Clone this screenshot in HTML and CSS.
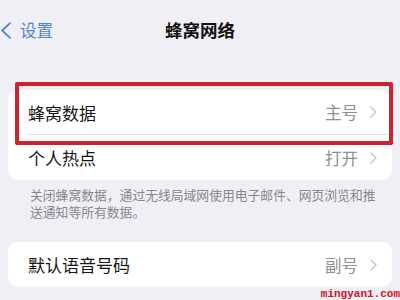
FILE: index.html
```html
<!DOCTYPE html>
<html lang="zh-CN">
<head>
<meta charset="utf-8">
<link rel="stylesheet" href="styles.css">
</head>
<body>
<div class="screen">
  <header class="nav">
    <div class="back">
      <svg class="back-icon" width="12" height="17" viewBox="0 0 12 17"><path d="M10 1.2 L2.2 8.5 L10 15.8" fill="none" stroke="#4f84d2" stroke-width="1.8" stroke-linecap="round" stroke-linejoin="round"/></svg>
      <span>设置</span>
    </div>
    <div class="title">蜂窝网络</div>
    <div></div>
  </header>

  <section class="card card-first">
    <div class="row">
      <span class="label">蜂窝数据</span>
      <span class="value">主号</span>
      <svg class="chev" width="7" height="12" viewBox="0 0 7 12"><path d="M1 1 L6 6 L1 11" fill="none" stroke="#c6c6ca" stroke-width="1.4" stroke-linecap="round" stroke-linejoin="round"/></svg>
    </div>
    <div class="sep"></div>
    <div class="row">
      <span class="label">个人热点</span>
      <span class="value">打开</span>
      <svg class="chev" width="7" height="12" viewBox="0 0 7 12"><path d="M1 1 L6 6 L1 11" fill="none" stroke="#c6c6ca" stroke-width="1.4" stroke-linecap="round" stroke-linejoin="round"/></svg>
    </div>
    <div class="highlight"></div>
  </section>
  <p class="note">关闭蜂窝数据，通过无线局域网使用电子邮件、网页浏览和推送通知等所有数据。</p>

  <section class="card card-second">
    <div class="row">
      <span class="label">默认语音号码</span>
      <span class="value">副号</span>
      <svg class="chev" width="7" height="12" viewBox="0 0 7 12"><path d="M1 1 L6 6 L1 11" fill="none" stroke="#c6c6ca" stroke-width="1.4" stroke-linecap="round" stroke-linejoin="round"/></svg>
    </div>
  </section>
  <div class="watermark">mingyan1.com</div>
</div>
</body>
</html>
```

FILE: styles.css
```css
* { box-sizing: border-box; }
html, body {
  margin: 0;
  padding: 0;
  background: #f0eff5;
}
body {
  font-family: "Noto Sans CJK SC", "Noto Sans", sans-serif;
  color: #111;
  width: 400px;
  height: 300px;
  overflow: hidden;
}
.screen {
  position: relative;
  width: 400px;
  height: 300px;
}
.nav {
  display: grid;
  grid-template-columns: 1fr auto 1fr;
  align-items: center;
  height: 44px;
  padding-top: 16px;
  margin-bottom: 46px;
}
.back {
  display: flex;
  align-items: center;
  color: #4f84d2;
  font-size: 16.5px;
  line-height: 20px;
}
.back-icon {
  margin-right: 8px;
  margin-left: 0;
}
.title {
  font-size: 17.5px;
  font-weight: 700;
  line-height: 20px;
  color: #111;
}
.card {
  position: relative;
  background: #fff;
  border-radius: 10px;
  margin: 0 8px;
}
.row {
  display: flex;
  align-items: center;
  height: 45px;
  padding: 0 15px 0 20px;
}
.label {
  flex: 1;
  font-size: 17px;
  color: #151515;
}
.value {
  font-size: 16.5px;
  color: #8e8e93;
  margin-right: 12px;
}
.chev { display: block; }
.sep {
  height: 1px;
  background: #e2e2e6;
  margin-left: 20px;
}
.card-first .row:first-child { height: 44px; }
.highlight {
  position: absolute;
  left: 7px;
  right: -1px;
  top: -8px;
  height: 63px;
  border: 4px solid #cc2331;
  border-radius: 2px;
}
.note {
  margin: 6px 20px 0 30px;
  font-size: 12.8px;
  line-height: 17px;
  color: #87878c;
}
.card-second {
  margin-top: 22px;
}
.watermark {
  position: absolute;
  right: 0;
  bottom: 0;
  font-family: "Liberation Mono", monospace;
  font-size: 11px;
  font-weight: 700;
  color: #d2141c;
  line-height: 12px;
}
```
